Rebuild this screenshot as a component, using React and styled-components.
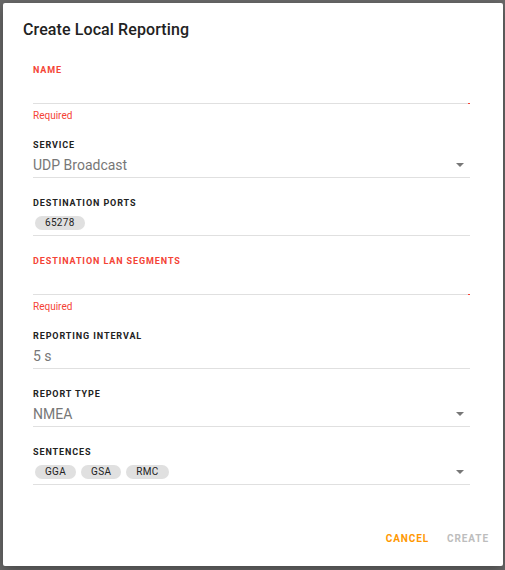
import React from 'react'
import styled, { createGlobalStyle } from 'styled-components'

const GlobalStyle = createGlobalStyle`
  html, body {
    margin: 0;
    padding: 0;
    background: #6a6a6a;
    font-family: Roboto, "Noto Sans", "Liberation Sans", sans-serif;
  }
`

const Backdrop = styled.div`
  padding: 3px 2px 4px 3px;
`

const Dialog = styled.div`
  width: 500px;
  height: 563px;
  background: #fff;
  border-radius: 2px;
  box-shadow: 0 4px 14px rgba(0, 0, 0, 0.35);
  display: flex;
  flex-direction: column;
  box-sizing: border-box;
`

const Title = styled.h2`
  margin: 17px 0 0 20px;
  font-size: 16px;
  line-height: 20px;
  font-weight: 500;
  letter-spacing: 0.1px;
  color: #222;
`

const Form = styled.div`
  flex: 1;
  padding: 24px 33px 0 30px;
`

const Field = styled.div`
  margin-bottom: ${p => (p.$error ? '17px' : '19px')};
`

const Label = styled.div`
  font-size: 9px;
  line-height: 12px;
  font-weight: 700;
  letter-spacing: 0.9px;
  text-transform: uppercase;
  color: ${p => (p.$error ? '#f44336' : '#222')};
`

const Row = styled.div`
  position: relative;
  margin-top: 2px;
  height: ${p => (p.$error ? '25px' : '24px')};
  display: flex;
  align-items: center;
  justify-content: space-between;
  border-bottom: 1px solid #e0e0e0;
  padding-right: 6px;

  &::after {
    content: '';
    display: ${p => (p.$error ? 'block' : 'none')};
    position: absolute;
    right: 0;
    bottom: -1px;
    width: 2px;
    height: 1px;
    background: #f44336;
  }
`

const Value = styled.span`
  font-size: 14px;
  color: #777;
`

const Chips = styled.div`
  display: flex;
  gap: 5px;
  padding-left: 2px;
`

const Chip = styled.span`
  height: 14px;
  line-height: 14px;
  padding: 0 10px;
  border-radius: 7px;
  background: #e0e0e0;
  font-size: 10px;
  letter-spacing: 0.3px;
  color: #222;
`

const Arrow = styled.span`
  width: 0;
  height: 0;
  border-left: 4px solid transparent;
  border-right: 4px solid transparent;
  border-top: 4px solid #777;
`

const Helper = styled.div`
  margin-top: 6px;
  font-size: 10px;
  line-height: 12px;
  color: #f44336;
`

const Actions = styled.div`
  display: flex;
  justify-content: flex-end;
  gap: 4px;
  padding: 0 7px 14px 0;
`

const Button = styled.button`
  border: none;
  background: transparent;
  height: 28px;
  padding: 0 7px;
  font-family: inherit;
  font-size: 10px;
  font-weight: 700;
  letter-spacing: 0.9px;
  text-transform: uppercase;
  color: ${p => (p.$disabled ? '#bdbdbd' : '#ff9800')};
  cursor: pointer;
`

const fields = [
  { label: 'Name', error: true },
  { label: 'Service', value: 'UDP Broadcast', select: true },
  { label: 'Destination Ports', chips: ['65278'] },
  { label: 'Destination LAN Segments', error: true },
  { label: 'Reporting Interval', value: '5 s' },
  { label: 'Report Type', value: 'NMEA', select: true },
  { label: 'Sentences', chips: ['GGA', 'GSA', 'RMC'], select: true }
]

const App = () => (
  <Backdrop>
    <GlobalStyle />
    <Dialog>
      <Title>Create Local Reporting</Title>
      <Form>
        {fields.map(f => (
          <Field key={f.label} $error={f.error}>
            <Label $error={f.error}>{f.label}</Label>
            <Row $error={f.error}>
              {f.chips ? (
                <Chips>
                  {f.chips.map(c => <Chip key={c}>{c}</Chip>)}
                </Chips>
              ) : (
                <Value>{f.value}</Value>
              )}
              {f.select && <Arrow />}
            </Row>
            {f.error && <Helper>Required</Helper>}
          </Field>
        ))}
      </Form>
      <Actions>
        <Button>Cancel</Button>
        <Button $disabled>Create</Button>
      </Actions>
    </Dialog>
  </Backdrop>
)

export default App
